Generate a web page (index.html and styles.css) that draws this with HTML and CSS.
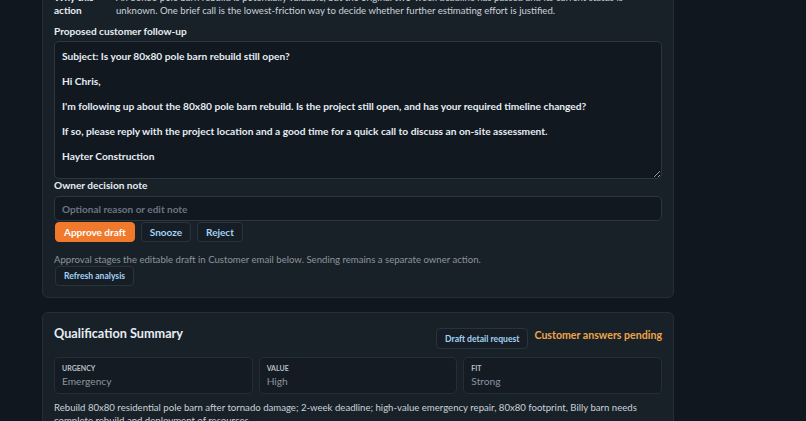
FILE: index.html
```html
<!DOCTYPE html>
<html lang="en">
<head>
<meta charset="utf-8">
<title>Lead action</title>
<link rel="stylesheet" href="styles.css">
</head>
<body>
<main class="page">
  <section class="card card-action">
    <div class="why">
      <div class="why-label">Why this action</div>
      <div class="why-text">An 80x80 pole barn rebuild is potentially valuable, but the original two-week deadline has passed and its current status is unknown. One brief call is the lowest-friction way to decide whether further estimating effort is justified.</div>
    </div>
    <label class="field-label label-follow" for="draft">Proposed customer follow-up</label>
    <textarea id="draft" class="draft" readonly>Subject: Is your 80x80 pole barn rebuild still open?

Hi Chris,

I'm following up about the 80x80 pole barn rebuild. Is the project still open, and has your required timeline changed?

If so, please reply with the project location and a good time for a quick call to discuss an on-site assessment.

Hayter Construction</textarea>
    <label class="field-label" for="note">Owner decision note</label>
    <input id="note" class="note" type="text" placeholder="Optional reason or edit note">
    <div class="actions">
      <button class="btn btn-primary">Approve draft</button>
      <button class="btn">Snooze</button>
      <button class="btn">Reject</button>
    </div>
    <p class="hint">Approval stages the editable draft in Customer email below. Sending remains a separate owner action.</p>
    <button class="btn btn-small">Refresh analysis</button>
  </section>

  <section class="card card-summary">
    <header class="summary-head">
      <h2 class="summary-title">Qualification Summary</h2>
      <div class="summary-tools">
        <button class="btn btn-small btn-detail">Draft detail request</button>
        <span class="pending">Customer answers pending</span>
      </div>
    </header>
    <div class="metrics">
      <div class="metric"><div class="metric-label">Urgency</div><div class="metric-value">Emergency</div></div>
      <div class="metric"><div class="metric-label">Value</div><div class="metric-value">High</div></div>
      <div class="metric"><div class="metric-label">Fit</div><div class="metric-value">Strong</div></div>
    </div>
    <p class="summary-text">Rebuild 80x80 residential pole barn after tornado damage; 2-week deadline; high-value emergency repair, 80x80 footprint, Billy barn needs complete rebuild and deployment of resources.</p>
  </section>
</main>
</body>
</html>
```

FILE: styles.css
```css
* { box-sizing: border-box; }
html, body {
  margin: 0;
  padding: 0;
  background: #10171e;
  height: 100%;
  overflow: hidden;
}
body {
  font-family: Lato, "Liberation Sans", sans-serif;
  font-size: 9.6px;
  line-height: 13px;
  color: #c9d1d9;
}
.page {
  width: 632px;
  margin-left: 42px;
  display: flex;
  flex-direction: column;
  gap: 14px;
}
.card {
  background: #192128;
  border: 1px solid #252e36;
  border-radius: 6px;
  padding: 11px;
  display: flex;
  flex-direction: column;
  align-items: flex-start;
}
.card-action { margin-top: -21px; }

.why {
  display: grid;
  grid-template-columns: 56px 1fr;
  column-gap: 6px;
  width: 100%;
}
.why-label { font-weight: 700; color: #e6edf3; font-size: 10px; }
.why-text { color: #c9d1d9; }

.field-label {
  display: block;
  font-weight: 700;
  font-size: 10.1px;
  color: #e6edf3;
  line-height: 13px;
  margin-bottom: 4px;
}
.label-follow { margin-top: 8px; margin-bottom: 3px; }

.draft {
  display: block;
  width: 100%;
  height: 138px;
  background: #111820;
  border: 1px solid #2d363f;
  border-radius: 5px;
  color: #e6edf3;
  font-family: Lato, "Liberation Sans", sans-serif;
  font-weight: 700;
  font-size: 10.2px;
  line-height: 12.5px;
  padding: 8px 7px;
  resize: vertical;
  margin: 0;
  outline: none;
  overflow: hidden;
}
.note {
  display: block;
  width: 100%;
  height: 25px;
  margin: 0;
  background: #111820;
  border: 1px solid #2d363f;
  border-radius: 5px;
  color: #e6edf3;
  font-family: Lato, "Liberation Sans", sans-serif;
  font-weight: 700;
  font-size: 10px;
  padding: 0 7px;
  outline: none;
}
.note::placeholder { color: #6b7580; }

.actions {
  display: flex;
  gap: 6px;
  margin: 1px 0 0 1px;
}
.btn {
  font-family: Lato, "Liberation Sans", sans-serif;
  font-weight: 700;
  font-size: 10px;
  height: 20px;
  padding: 0 8px;
  border-radius: 4px;
  border: 1px solid #29333c;
  background: #161d24;
  color: #a3d3f5;
  cursor: pointer;
}
.btn-primary {
  background: #f0792b;
  border-color: #f0792b;
  color: #ffffff;
}
.hint {
  margin: 11px 0 0 0;
  color: #8b949e;
  line-height: 13px;
}
.btn-small {
  font-size: 8.6px;
  margin-left: 1px;
}

.summary-head {
  width: 100%;
  display: flex;
  justify-content: space-between;
  align-items: flex-start;
}
.summary-title {
  margin: 0;
  font-size: 12.7px;
  line-height: 18px;
  font-weight: 700;
  color: #e6edf3;
}
.summary-tools {
  display: flex;
  align-items: flex-start;
  gap: 6px;
  margin-top: 4px;
}
.btn-detail { height: 21px; }
.pending {
  font-weight: 700;
  font-size: 10.6px;
  line-height: 14px;
  color: #eea54a;
}
.metrics {
  width: 100%;
  display: grid;
  grid-template-columns: repeat(3, 1fr);
  gap: 6px;
  margin-top: 8px;
}
.metric {
  background: #141b22;
  border: 1px solid #252e36;
  border-radius: 5px;
  height: 37px;
  padding: 5px 7px 0;
}
.metric-label {
  text-transform: uppercase;
  font-size: 7px;
  font-weight: 700;
  line-height: 10px;
  color: #b8c0c8;
  margin-bottom: 2px;
}
.metric-value {
  color: #8b949e;
  font-size: 10.2px;
  line-height: 13px;
}
.summary-text {
  margin: 7px 0 0 0;
  color: #c9d1d9;
  line-height: 13px;
}
```
